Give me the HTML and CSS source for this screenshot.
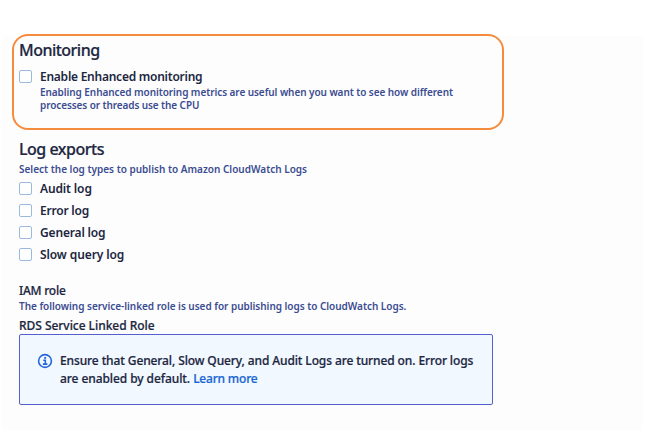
FILE: index.html
```
<!DOCTYPE html>
<html lang="en">
<head>
<meta charset="utf-8">
<title>Monitoring and log exports</title>
<link rel="stylesheet" href="styles.css">
</head>
<body>
<main class="page">
  <section class="monitoring">
    <h2 class="heading"><span class="t-monitoring">Monitoring</span></h2>
    <label class="option">
      <input type="checkbox" class="box">
      <span class="t-enable">Enable Enhanced monitoring</span>
    </label>
    <p class="hint indented"><span class="t-hint1">Enabling Enhanced monitoring metrics are useful when you want to see how different</span><br><span class="t-hint2">processes or threads use the CPU</span></p>
  </section>
  <section class="exports">
    <h2 class="heading"><span class="t-exports">Log exports</span></h2>
    <p class="hint"><span class="t-select">Select the log types to publish to Amazon CloudWatch Logs</span></p>
    <div class="options">
      <label class="option"><input type="checkbox" class="box"><span class="t-audit">Audit log</span></label>
      <label class="option"><input type="checkbox" class="box"><span class="t-error">Error log</span></label>
      <label class="option"><input type="checkbox" class="box"><span class="t-general">General log</span></label>
      <label class="option"><input type="checkbox" class="box"><span class="t-slow">Slow query log</span></label>
    </div>
  </section>
  <section class="role">
    <h3 class="label"><span class="t-iam">IAM role</span></h3>
    <p class="hint"><span class="t-following">The following service-linked role is used for publishing logs to CloudWatch Logs.</span></p>
    <h3 class="label service"><span class="t-rds">RDS Service Linked Role</span></h3>
    <div class="alert">
      <svg class="info" viewBox="0 0 16 16" aria-hidden="true">
        <circle cx="8" cy="8" r="6.4"/>
        <path d="M6.2 7.2H8.3V11M5.9 11.1H10.4"/>
        <rect x="7.2" y="4" width="1.9" height="1.8"/>
      </svg>
      <p class="message"><span class="t-ensure">Ensure that General, Slow Query, and Audit Logs are turned on. Error logs</span><br><span class="t-default">are enabled by default.</span> <a class="link" href="#">Learn more</a></p>
    </div>
  </section>
</main>
</body>
</html>
```
FILE: styles.css
```
* { box-sizing: border-box; }
body {
  margin: 0;
  background: #fff;
  color: #20263f;
  font-family: "Noto Sans", "Open Sans", sans-serif;
  font-weight: 600;
  font-size: 12px;
  white-space: nowrap;
}
h2, h3, p { margin: 0; font-weight: 600; }
.page {
  height: 431px;
  padding: 34px 0 0 12px;
  background: linear-gradient(#fdfdfd, #fdfdfd) 2px 36px / 641px 395px no-repeat;
}
.monitoring {
  width: 492px;
  height: 96px;
  padding: 4px 5px;
  border: 2px solid #f58b3d;
  border-radius: 16px;
}
.heading { font-size: 16px; line-height: 20px; font-weight: 500; -webkit-text-stroke: 0.2px; }
.option { display: flex; align-items: center; gap: 8px; height: 22px; }
.monitoring .option { margin-top: 5px; }
.box {
  appearance: none;
  width: 13px;
  height: 13px;
  margin: 0;
  border: 1px solid #9bb9df;
  border-radius: 2px;
  background: #fff;
}
.hint { color: #3b4c91; font-size: 10px; line-height: 13px; }
.indented { margin: -1px 0 0 21px; }
.exports { padding: 9px 0 0 7px; }
.exports .hint { margin-top: 4px; }
.options { margin-top: 1px; }
.role { padding: 18px 0 0 7px; }
.label { font-size: 12px; line-height: 16px; font-weight: 500; -webkit-text-stroke: 0.2px; }
.role .hint { margin-top: 1px; }
.service { margin-top: 4px; padding-top: 1px; line-height: 15px; }
.alert {
  display: flex;
  width: 474px;
  height: 71px;
  margin-top: 1px;
  padding: 17px 0 0 17px;
  border: 1px solid #5560d0;
  border-radius: 2px;
  background: #f1f8ff;
}
.info { flex: none; width: 16px; height: 16px; margin: 1px 7px 0 0; fill: none; stroke: #2468d8; stroke-width: 1.6; }
.info rect { fill: #2468d8; stroke: none; }
.message { line-height: 18px; font-weight: 500; -webkit-text-stroke: 0.2px; }
.link { color: #1765d2; text-decoration: none; letter-spacing: -0.2px; }

.t-monitoring { letter-spacing: -0.52px; }
.t-exports { letter-spacing: -0.48px; }
.t-enable { letter-spacing: -0.25px; }
.t-hint1 { letter-spacing: -0.07px; }
.t-hint2 { letter-spacing: -0.1px; }
.t-select { letter-spacing: 0; }
.t-audit { letter-spacing: -0.13px; }
.t-error { letter-spacing: -0.22px; }
.t-general { letter-spacing: -0.17px; }
.t-slow { letter-spacing: -0.1px; }
.t-iam { letter-spacing: -0.25px; }
.t-following { letter-spacing: -0.03px; }
.t-rds { letter-spacing: -0.04px; }
.t-ensure { letter-spacing: -0.11px; }
.t-default { letter-spacing: -0.08px; }
```
